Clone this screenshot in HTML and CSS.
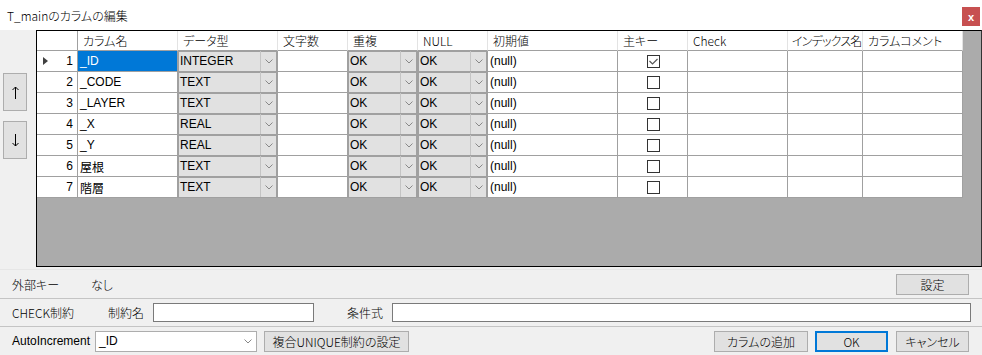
FILE: index.html
```html
<!doctype html>
<html>
<head>
<meta charset="utf-8">
<title>T_mainのカラムの編集</title>
<link rel="stylesheet" href="styles.css">
</head>
<body>
<div class="titlebar">
	<span class="title">T_mainのカラムの編集</span>
	<span class="close">x</span>
</div>
<div class="main">
	<div class="side">
		<button class="move" title="↑"><svg width="7" height="13" viewBox="0 0 7 13"><path d="M3.5 1V13M0.5 4L3.5 1L6.5 4" fill="none" stroke="#000" stroke-width="1"/></svg></button>
		<button class="move" title="↓"><svg width="7" height="13" viewBox="0 0 7 13"><path d="M3.5 0V12M0.5 9L3.5 12L6.5 9" fill="none" stroke="#000" stroke-width="1"/></svg></button>
	</div>
	<div class="gridbox">
		<div class="grid">
			<div class="hd rh"></div>
			<div class="hd">カラム名</div>
			<div class="hd">データ型</div>
			<div class="hd">文字数</div>
			<div class="hd">重複</div>
			<div class="hd">NULL</div>
			<div class="hd">初期値</div>
			<div class="hd">主キー</div>
			<div class="hd">Check</div>
			<div class="hd tight">インデックス名</div>
			<div class="hd">カラムコメント</div>

			<div class="c rh"><span class="arrow"></span>1</div>
			<div class="c sel">_ID</div>
			<div class="c combo"><span>INTEGER</span><i></i></div>
			<div class="c"></div>
			<div class="c combo"><span>OK</span><i></i></div>
			<div class="c combo"><span>OK</span><i></i></div>
			<div class="c">(null)</div>
			<div class="c ck"><span class="box on"></span></div>
			<div class="c"></div>
			<div class="c"></div>
			<div class="c"></div>

			<div class="c rh">2</div>
			<div class="c">_CODE</div>
			<div class="c combo"><span>TEXT</span><i></i></div>
			<div class="c"></div>
			<div class="c combo"><span>OK</span><i></i></div>
			<div class="c combo"><span>OK</span><i></i></div>
			<div class="c">(null)</div>
			<div class="c ck"><span class="box"></span></div>
			<div class="c"></div>
			<div class="c"></div>
			<div class="c"></div>

			<div class="c rh">3</div>
			<div class="c">_LAYER</div>
			<div class="c combo"><span>TEXT</span><i></i></div>
			<div class="c"></div>
			<div class="c combo"><span>OK</span><i></i></div>
			<div class="c combo"><span>OK</span><i></i></div>
			<div class="c">(null)</div>
			<div class="c ck"><span class="box"></span></div>
			<div class="c"></div>
			<div class="c"></div>
			<div class="c"></div>

			<div class="c rh">4</div>
			<div class="c">_X</div>
			<div class="c combo"><span>REAL</span><i></i></div>
			<div class="c"></div>
			<div class="c combo"><span>OK</span><i></i></div>
			<div class="c combo"><span>OK</span><i></i></div>
			<div class="c">(null)</div>
			<div class="c ck"><span class="box"></span></div>
			<div class="c"></div>
			<div class="c"></div>
			<div class="c"></div>

			<div class="c rh">5</div>
			<div class="c">_Y</div>
			<div class="c combo"><span>REAL</span><i></i></div>
			<div class="c"></div>
			<div class="c combo"><span>OK</span><i></i></div>
			<div class="c combo"><span>OK</span><i></i></div>
			<div class="c">(null)</div>
			<div class="c ck"><span class="box"></span></div>
			<div class="c"></div>
			<div class="c"></div>
			<div class="c"></div>

			<div class="c rh">6</div>
			<div class="c">屋根</div>
			<div class="c combo"><span>TEXT</span><i></i></div>
			<div class="c"></div>
			<div class="c combo"><span>OK</span><i></i></div>
			<div class="c combo"><span>OK</span><i></i></div>
			<div class="c">(null)</div>
			<div class="c ck"><span class="box"></span></div>
			<div class="c"></div>
			<div class="c"></div>
			<div class="c"></div>

			<div class="c rh">7</div>
			<div class="c">階層</div>
			<div class="c combo"><span>TEXT</span><i></i></div>
			<div class="c"></div>
			<div class="c combo"><span>OK</span><i></i></div>
			<div class="c combo"><span>OK</span><i></i></div>
			<div class="c">(null)</div>
			<div class="c ck"><span class="box"></span></div>
			<div class="c"></div>
			<div class="c"></div>
			<div class="c"></div>
		</div>
	</div>
</div>
<div class="row rowa">
	<span class="lbl">外部キー</span>
	<span class="val">なし</span>
	<button class="btn set">設定</button>
</div>
<div class="row rowb">
	<span class="lbl">CHECK制約</span>
	<span class="lbl2">制約名</span>
	<span class="input name"></span>
	<span class="lbl3">条件式</span>
	<span class="input expr"></span>
</div>
<div class="row rowc">
	<span class="lbl">AutoIncrement</span>
	<span class="select"><span>_ID</span><i></i></span>
	<button class="btn uniq">複合UNIQUE制約の設定</button>
	<button class="btn add">カラムの追加</button>
	<button class="btn ok">OK</button>
	<button class="btn cancel">キャンセル</button>
</div>
</body>
</html>
```

FILE: styles.css
```css
body {
	margin: 0;
	background: #f0f0f0;
	font: 12px "Liberation Sans", "Noto Sans CJK JP", sans-serif;
	font-feature-settings: "palt";
	color: #000;
	width: 982px;
	height: 355px;
	overflow: hidden;
}
button {
	font: inherit;
	color: #000;
	padding: 0;
}
.titlebar {
	height: 30px;
	background: #fff;
	display: flex;
	align-items: center;
	justify-content: space-between;
}
.title {
	margin-left: 7px;
	font-family: "Noto Sans CJK JP", sans-serif;
	font-weight: 300;
}
.close {
	width: 18px;
	height: 19px;
	margin: 3px 2px 0 0;
	background: #c75050;
	color: #fff;
	font-weight: bold;
	font-size: 11px;
	display: flex;
	align-items: center;
	justify-content: center;
}
.main {
	display: flex;
	height: 237px;
	margin-bottom: 2px;
}
.side {
	width: 36px;
	display: flex;
	flex-direction: column;
	gap: 10px;
	padding: 43px 0 0 3px;
	box-sizing: border-box;
}
.move {
	width: 24px;
	height: 38px;
	background: #e1e1e1;
	border: 1px solid #adadad;
	display: flex;
	align-items: center;
	justify-content: center;
}
.gridbox {
	flex: 1;
	background: #ababab;
	border: 1px solid #000;
	border-right-color: #333;
	overflow: hidden;
}
.grid {
	display: grid;
	grid-template-columns: 41px 100px 100px 70px 70px 70px 130px 70px 100px 75px 100px;
	grid-template-rows: 20px;
	grid-auto-rows: 21px;
	width: 926px;
}
.grid > div {
	box-sizing: border-box;
	background: #fff;
	border-right: 1px solid #a0a0a0;
	border-bottom: 1px solid #a0a0a0;
	padding-left: 2px;
	display: flex;
	align-items: center;
	white-space: nowrap;
	overflow: hidden;
}
.grid > .hd {
	border-right-color: #e3e3e3;
	padding-left: 5px;
	font-family: "Noto Sans CJK JP", sans-serif;
	font-weight: 300;
}
.grid > .hd.tight {
	padding-left: 4px;
	letter-spacing: -0.8px;
}
.grid > .rh {
	border-right-color: #a0a0a0;
	justify-content: flex-end;
	padding: 0 4px 0 0;
	position: relative;
}
.grid > .hd.rh {
	border-right-color: #a0a0a0;
}
.arrow {
	position: absolute;
	left: 6px;
	top: 6px;
	border-style: solid;
	border-width: 4px 0 4px 5px;
	border-color: transparent transparent transparent #404040;
}
.grid > .sel {
	background: #0078d7;
	color: #fff;
}
.grid > .combo {
	background: #e1e1e1;
	padding: 0;
	box-shadow: inset 1px 1px 0 #a0a0a0, inset -1px 0 0 #a0a0a0;
}
.combo span {
	flex: 1;
	padding-left: 2px;
}
.combo i, .select i {
	width: 16px;
	align-self: stretch;
	border-left: 1px solid #c4c4c4;
	background: no-repeat center url("data:image/svg+xml,%3Csvg xmlns='http://www.w3.org/2000/svg' width='8' height='5'%3E%3Cpolyline points='0.5,0.5 4,4 7.5,0.5' fill='none' stroke='%23888' stroke-width='1'/%3E%3C/svg%3E");
}
.grid > .ck {
	justify-content: center;
	padding: 0;
}
.box {
	width: 13px;
	height: 13px;
	box-sizing: border-box;
	border: 1px solid #333;
	background: #fff;
	margin-left: 1px;
}
.box.on {
	background: no-repeat center url("data:image/svg+xml,%3Csvg xmlns='http://www.w3.org/2000/svg' width='9' height='7'%3E%3Cpolyline points='0.5,3 3.5,6 8.5,1' fill='none' stroke='%23555' stroke-width='1.2'/%3E%3C/svg%3E");
}
.row {
	display: flex;
	align-items: center;
	box-sizing: border-box;
	border-top: 1px solid #d8d8d8;
	padding-left: 12px;
	font-family: "Noto Sans CJK JP", sans-serif;
	font-weight: 300;
}
.rowa {
	height: 29px;
	border-top-color: #e6e6e6;
}
.rowb {
	height: 28px;
	border-top-color: #c4c4c4;
}
.rowc {
	height: 29px;
	border-top-color: #c4c4c4;
}
.lbl {
	width: 79px;
}
.rowc .lbl {
	width: 83px;
	font-family: "Liberation Sans", sans-serif;
}
.btn {
	height: 21px;
	background: #e1e1e1;
	border: 1px solid #adadad;
	font-family: "Noto Sans CJK JP", sans-serif;
	font-weight: 300;
}
.set {
	width: 73px;
	margin-left: auto;
	margin-right: 13px;
}
.lbl2 {
	margin-left: 17px;
	width: 45px;
}
.input {
	height: 19px;
	background: #fff;
	border: 1px solid #7a7a7a;
	box-sizing: border-box;
}
.name {
	width: 161px;
}
.lbl3 {
	margin-left: 33px;
	width: 45px;
}
.expr {
	width: 579px;
}
.select {
	width: 162px;
	height: 21px;
	box-sizing: border-box;
	background: #fff;
	border: 1px solid #adadad;
	display: flex;
	align-items: center;
}
.select span {
	flex: 1;
	padding-left: 3px;
	font-family: "Liberation Sans", sans-serif;
}
.select i {
	border-left: none;
}
.uniq {
	width: 145px;
	margin-left: 7px;
}
.add {
	width: 94px;
	margin-left: auto;
}
.ok {
	width: 73px;
	margin-left: 7px;
	border: 2px solid #0078d7;
}
.cancel {
	width: 73px;
	margin-left: 8px;
	margin-right: 13px;
}
```
